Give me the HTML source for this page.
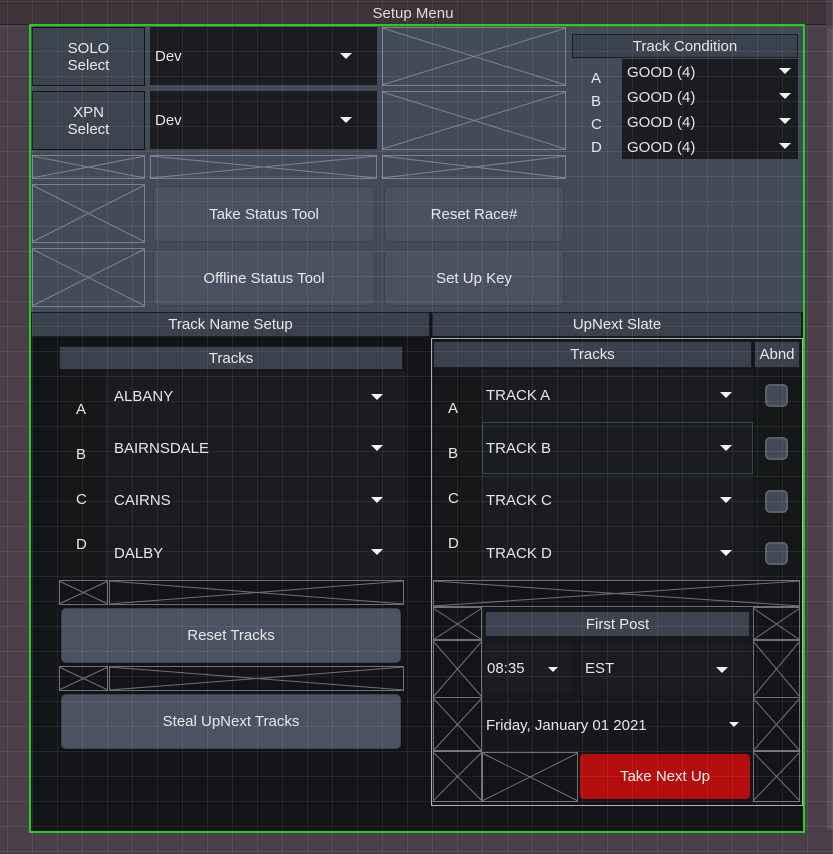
<!DOCTYPE html>
<html><head><meta charset="utf-8"><style>
*{box-sizing:border-box;margin:0;padding:0}
body{width:833px;height:854px;background:#4a3f48;font-family:"Liberation Sans",sans-serif;color:#e6e6e6;position:relative;overflow:hidden;font-size:15px}
.a{position:absolute}
.c{display:flex;align-items:center;justify-content:center;text-align:center}
.hdr{background:#3b424d;border:1px solid #1a1c20;color:#e8e8e8}
.btn{background:#4a5261;border:1px solid #3c434f;border-radius:5px;color:#e8e8e8}
.dd{background:#1b1c1f}
.arr{position:absolute;width:0;height:0;border-left:6px solid transparent;border-right:6px solid transparent;border-top:6px solid #f2f2f2}
svg.x{position:absolute}
.grid{position:absolute;left:0;top:0;width:833px;height:854px;pointer-events:none;
background-image:linear-gradient(to right,rgba(255,255,255,.07) 1px,transparent 1px),linear-gradient(to bottom,rgba(255,255,255,.07) 1px,transparent 1px);
background-size:25px 25px;background-position:7px 1px}
.chk{position:absolute;width:23px;height:23px;background:#434955;border:2px solid #5a606b;border-radius:5px}
</style></head><body>
<div class="a c" style="left:0;top:0;width:826px;height:25px;padding-top:2px;background:#3d3339;border-bottom:1px solid #2a2227;color:#ddd;font-size:15px">Setup Menu</div>
<div class="a" style="left:827px;top:28px;width:6px;height:802px;background:#5b5259"></div>
<div class="a" style="left:29px;top:24px;width:775px;height:808px;background:#131418"></div>
<div class="a" style="left:30px;top:25px;width:773px;height:287px;background:#434b58"></div>

<div class="a c hdr" style="left:32px;top:27px;width:113px;height:59px;background:#3d4450;border:1px solid #111">SOLO<br>Select</div>
<div class="a c hdr" style="left:32px;top:91px;width:113px;height:59px;background:#3d4450;border:1px solid #111">XPN<br>Select</div>
<div class="a dd" style="left:150px;top:27px;width:227px;height:58px"><span class="a" style="left:5px;top:21px">Dev</span><div class="arr" style="left:190px;top:26px"></div></div>
<div class="a dd" style="left:150px;top:91px;width:227px;height:58px"><span class="a" style="left:5px;top:21px">Dev</span><div class="arr" style="left:190px;top:26px"></div></div>

<svg class="x" style="left:0;top:0" width="833" height="854" stroke="#7d838d" stroke-width="1" fill="none">
<g>
<rect x="382.5" y="27.5" width="183" height="58"/><path d="M382 28L566 85M382 85L566 28"/>
<rect x="382.5" y="91.5" width="183" height="58"/><path d="M382 92L566 149M382 149L566 92"/>
<rect x="32.5" y="155.5" width="112" height="23"/><path d="M32 156L145 178M32 178L145 156"/>
<rect x="150.5" y="155.5" width="226" height="23"/><path d="M150 156L377 178M150 178L377 156"/>
<rect x="382.5" y="155.5" width="183" height="23"/><path d="M382 156L566 178M382 178L566 156"/>
<rect x="32.5" y="184.5" width="112" height="58"/><path d="M32 185L145 242M32 242L145 185"/>
<rect x="32.5" y="248.5" width="112" height="58"/><path d="M32 249L145 306M32 306L145 249"/>
</g>
<g stroke="#6e7278">
<rect x="59.5" y="580.5" width="48" height="24"/><path d="M59 581L108 604M59 604L108 581"/>
<rect x="109.5" y="580.5" width="294" height="24"/><path d="M109 581L404 604M109 604L404 581"/>
<rect x="59.5" y="666.5" width="48" height="24"/><path d="M59 667L108 690M59 690L108 667"/>
<rect x="109.5" y="666.5" width="294" height="24"/><path d="M109 667L404 690M109 690L404 667"/>
<rect x="433.5" y="580.5" width="366" height="26"/><path d="M433 581L800 606M433 606L800 581"/>
<rect x="433.5" y="607.5" width="48" height="32"/><path d="M433 608L482 640M433 640L482 608"/>
<rect x="433.5" y="640.5" width="48" height="57"/><path d="M433 641L482 697M433 697L482 641"/>
<rect x="433.5" y="697.5" width="48" height="53"/><path d="M433 698L482 751M433 751L482 698"/>
<rect x="433.5" y="751.5" width="48" height="50"/><path d="M433 752L482 801M433 801L482 752"/>
<rect x="753.5" y="607.5" width="46" height="32"/><path d="M753 608L800 640M753 640L800 608"/>
<rect x="753.5" y="640.5" width="46" height="57"/><path d="M753 641L800 697M753 697L800 641"/>
<rect x="753.5" y="697.5" width="46" height="53"/><path d="M753 698L800 751M753 751L800 698"/>
<rect x="753.5" y="751.5" width="46" height="50"/><path d="M753 752L800 801M753 801L800 752"/>
<rect x="482.5" y="752.5" width="95" height="49"/><path d="M482 753L578 801M482 801L578 753"/>
</g>
</svg>

<div class="a c btn" style="left:153px;top:186px;width:222px;height:56px">Take Status Tool</div>
<div class="a c btn" style="left:384px;top:186px;width:180px;height:56px">Reset Race#</div>
<div class="a c btn" style="left:153px;top:250px;width:222px;height:56px">Offline Status Tool</div>
<div class="a c btn" style="left:384px;top:250px;width:180px;height:56px">Set Up Key</div>

<div class="a c hdr" style="left:572px;top:34px;width:226px;height:24px">Track Condition</div>
<div class="a dd" style="left:622px;top:59px;width:176px;height:100px"></div>
<div class="a" style="left:591px;top:67px;line-height:23px;font-size:15px">A<br>B<br>C<br>D</div>
<div class="a" style="left:627px;top:60px;line-height:25px">GOOD (4)<br>GOOD (4)<br>GOOD (4)<br>GOOD (4)</div>
<div class="arr" style="left:779px;top:68px"></div><div class="arr" style="left:779px;top:93px"></div><div class="arr" style="left:779px;top:118px"></div><div class="arr" style="left:779px;top:143px"></div>

<div class="a c hdr" style="left:31px;top:312px;width:399px;height:25px">Track Name Setup</div>
<div class="a c hdr" style="left:432px;top:312px;width:370px;height:25px">UpNext Slate</div>

<div class="a c hdr" style="left:59px;top:346px;width:344px;height:24px">Tracks</div>
<div class="a" style="left:60px;top:371px;width:346px;height:208px;background:#1b1c1f"></div>
<div class="a" style="left:60px;top:371px;width:45px;height:208px;background:#161719"></div>
<div class="a" style="left:76px;top:401px">A</div><div class="a" style="left:76px;top:446px">B</div><div class="a" style="left:76px;top:491px">C</div><div class="a" style="left:76px;top:536px">D</div>
<div class="a" style="left:114px;top:388px">ALBANY</div><div class="a" style="left:114px;top:440px">BAIRNSDALE</div><div class="a" style="left:114px;top:492px">CAIRNS</div><div class="a" style="left:114px;top:545px">DALBY</div>
<div class="arr" style="left:371px;top:394px"></div><div class="arr" style="left:371px;top:445px"></div><div class="arr" style="left:371px;top:497px"></div><div class="arr" style="left:371px;top:549px"></div>
<div class="a c btn" style="left:61px;top:608px;width:340px;height:55px;background:#4b5362">Reset Tracks</div>
<div class="a c btn" style="left:61px;top:694px;width:340px;height:55px;background:#4b5362">Steal UpNext Tracks</div>

<div class="a" style="left:431px;top:338px;width:372px;height:468px;border:1px solid #b0b0b0"></div>
<div class="a c hdr" style="left:433px;top:341px;width:319px;height:27px">Tracks</div>
<div class="a c hdr" style="left:754px;top:341px;width:46px;height:27px">Abnd</div>
<div class="a" style="left:433px;top:369px;width:367px;height:211px;background:#1b1c1f"></div>
<div class="a" style="left:433px;top:369px;width:48px;height:211px;background:#161719"></div>
<div class="a" style="left:753px;top:369px;width:47px;height:211px;background:#161719"></div>
<div class="a" style="left:482px;top:422px;width:271px;height:52px;border:1px solid #2c4556"></div>
<div class="a" style="left:448px;top:400px">A</div><div class="a" style="left:448px;top:445px">B</div><div class="a" style="left:448px;top:490px">C</div><div class="a" style="left:448px;top:535px">D</div>
<div class="a" style="left:486px;top:387px">TRACK A</div><div class="a" style="left:486px;top:440px">TRACK B</div><div class="a" style="left:486px;top:492px">TRACK C</div><div class="a" style="left:486px;top:545px">TRACK D</div>
<div class="arr" style="left:720px;top:392px"></div><div class="arr" style="left:720px;top:445px"></div><div class="arr" style="left:720px;top:497px"></div><div class="arr" style="left:720px;top:550px"></div>
<div class="chk" style="left:765px;top:384px"></div><div class="chk" style="left:765px;top:437px"></div><div class="chk" style="left:765px;top:490px"></div><div class="chk" style="left:765px;top:542px"></div>

<div class="a" style="left:482px;top:608px;width:271px;height:144px;background:#17181b"></div>
<div class="a c hdr" style="left:485px;top:611px;width:265px;height:26px;background:#3d4450">First Post</div>
<div class="a dd" style="left:484px;top:643px;width:89px;height:51px"><span class="a" style="left:3px;top:17px">08:35</span><div class="arr" style="left:64px;top:24px;border-left-width:5px;border-right-width:5px;border-top-width:5px"></div></div>
<div class="a dd" style="left:580px;top:643px;width:171px;height:52px"><span class="a" style="left:5px;top:17px">EST</span><div class="arr" style="left:136px;top:24px"></div></div>
<div class="a" style="left:486px;top:717px">Friday, January 01 2021</div>
<div class="arr" style="left:729px;top:722px;border-left-width:5px;border-right-width:5px;border-top-width:5px"></div>
<div class="a c" style="left:580px;top:754px;width:170px;height:45px;background:#b30d0d;border-radius:4px;color:#f0f0f0">Take Next Up</div>

<div class="grid"></div>
<div class="a" style="left:29px;top:24px;width:776px;height:809px;border:2px solid #22d022"></div>
</body></html>
